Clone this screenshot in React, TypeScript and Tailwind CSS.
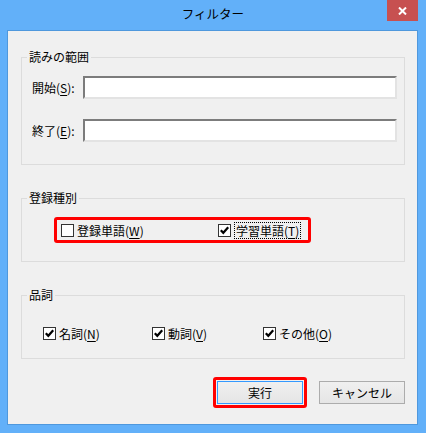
import React from "react"

function CheckBox({ checked }: { checked: boolean }) {
  return (
    <span className="flex h-[13px] w-[13px] shrink-0 items-center justify-center border border-[#333333] bg-white">
      {checked && (
        <svg width="11" height="11" viewBox="0 0 11 11">
          <path d="M1.8 5.2 L4.3 7.8 L9.2 2.2" fill="none" stroke="#000" strokeWidth="2.2" />
        </svg>
      )}
    </span>
  )
}

function Check({
  label,
  accel,
  checked,
  focused,
  className,
}: {
  label: string
  accel: string
  checked: boolean
  focused?: boolean
  className?: string
}) {
  return (
    <label className={`flex items-center gap-[3px] ${className ?? ""}`}>
      <CheckBox checked={checked} />
      <span className={`leading-[15px] ${focused ? "border border-dotted border-black px-px" : ""}`}>
        {label}(<u className="underline-offset-2">{accel}</u>)
      </span>
    </label>
  )
}

function Field({ label, accel, className }: { label: string; accel: string; className?: string }) {
  return (
    <div className={`flex items-center pl-[10px] pr-[7px] ${className ?? ""}`}>
      <span className="w-[51px] shrink-0">
        {label}(<u className="underline-offset-2">{accel}</u>):
      </span>
      <input
        className="h-[23px] flex-1 border-2 border-t-[#7c7c7c] border-l-[#7c7c7c] border-b-[#e3e3e3] border-r-[#e3e3e3] bg-white outline-none"
        type="text"
      />
    </div>
  )
}

function Group({ title, className, children }: { title: string; className?: string; children: React.ReactNode }) {
  return (
    <fieldset className={`border border-[#dcdcdc] ${className ?? ""}`}>
      <legend className="ml-[5px] px-[2px] leading-[16px]">{title}</legend>
      {children}
    </fieldset>
  )
}

export default function App() {
  return (
    <div className="flex h-[433px] w-[426px] flex-col bg-[#62b0f9] font-['Noto_Sans_CJK_JP',sans-serif] text-[12px] text-black">
      {/* title bar */}
      <div className="relative flex h-[30px] shrink-0 items-center justify-center pb-[2px] text-[12.5px]">
        フィルター
        <div className="absolute right-[8px] top-0 flex h-[21px] w-[31px] items-center justify-center bg-[#c75050]">
          <svg width="9" height="8" viewBox="0 0 9 8">
            <path d="M1 0.5 L8 7.5 M8 0.5 L1 7.5" stroke="#fff" strokeWidth="2" />
          </svg>
        </div>
      </div>

      {/* client area */}
      <div className="mb-[8px] ml-[7px] mr-[8px] flex-1 border border-[#4f98dd] bg-[#f0f0f0] pl-[13px] pr-[12px] pt-[18px]">
        <Group title="読みの範囲">
          <div className="pb-[22px] pt-[11px]">
            <Field label="開始" accel="S" />
            <Field label="終了" accel="E" className="mt-[20px]" />
          </div>
        </Group>

        <Group title="登録種別" className="mt-[25px]">
          <div className="pb-[18px] pt-[11px]">
            <div className="ml-[32px] flex h-[26px] w-[257px] items-center rounded-[3px] border-[3px] border-[#ff0000] pl-[4px]">
              <Check label="登録単語" accel="W" checked={false} className="w-[157px]" />
              <Check label="学習単語" accel="T" checked focused />
            </div>
          </div>
        </Group>

        <Group title="品詞" className="mt-[25px]">
          <div className="flex pb-[17px] pl-[21px] pt-[23px]">
            <Check label="名詞" accel="N" checked className="w-[109px]" />
            <Check label="動詞" accel="V" checked className="w-[111px]" />
            <Check label="その他" accel="O" checked />
          </div>
        </Group>

        <div className="mt-[18px] flex items-center justify-end">
          <div className="rounded-[3px] border-[3px] border-[#ff0000] p-px">
            <button className="block h-[23px] w-[86px] border border-[#3399ff] bg-gradient-to-b from-[#f0f0f0] to-[#e5e5e5]">
              実行
            </button>
          </div>
          <button className="ml-[12px] h-[23px] w-[86px] border border-[#acacac] bg-gradient-to-b from-[#f0f0f0] to-[#e5e5e5]">
            キャンセル
          </button>
        </div>
      </div>
    </div>
  )
}
